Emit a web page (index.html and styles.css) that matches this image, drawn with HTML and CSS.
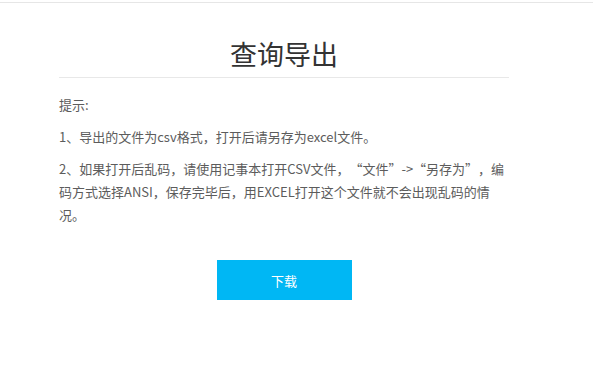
FILE: index.html
```html
<!DOCTYPE html>
<html lang="zh-CN">
<head>
<meta charset="utf-8">
<title>查询导出</title>
<link rel="stylesheet" href="styles.css">
</head>
<body>
<div class="topline"></div>
<main class="panel">
  <h1 class="title">查询导出</h1>
  <div class="tips">
    <p>提示:</p>
    <p>1、导出的文件为csv格式，打开后请另存为excel文件。</p>
    <p>2、如果打开后乱码，请使用记事本打开CSV文件，“文件”-&gt;“另存为”，编码方式选择ANSI，保存完毕后，用EXCEL打开这个文件就不会出现乱码的情况。</p>
  </div>
  <div class="actions">
    <button class="btn" type="button">下载</button>
  </div>
</main>
</body>
</html>
```

FILE: styles.css
```css
html, body {
  margin: 0;
  padding: 0;
  background: #fff;
}
body {
  font-family: "Noto Sans CJK SC", "Liberation Sans", sans-serif;
  color: #333;
  text-spacing-trim: space-all;
}
.topline {
  height: 2px;
  border-bottom: 1px solid #e6e6e6;
}
.panel {
  width: 450px;
  margin-left: 59px;
}
.title {
  margin: 0;
  padding-top: 31px;
  height: 43px;
  line-height: 40px;
  border-bottom: 1px solid #e8e8e8;
  text-align: center;
  font-size: 27px;
  font-weight: normal;
  color: #333;
}
.tips {
  padding-top: 15px;
  font-size: 13px;
  line-height: 23px;
  color: #5c5c5c;
}
.tips p {
  margin: 0 0 9px;
}
.actions {
  display: flex;
  justify-content: center;
  padding-top: 25px;
}
.btn {
  width: 135px;
  height: 40px;
  border: 0;
  background: #00b7f4;
  color: #fff;
  font-family: "Noto Sans CJK SC", sans-serif;
  font-size: 13px;
  padding: 0;
  cursor: pointer;
}
```
